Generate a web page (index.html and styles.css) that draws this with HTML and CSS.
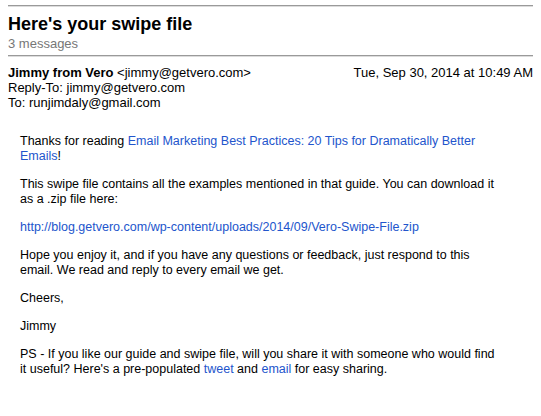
FILE: index.html
```html
<!DOCTYPE html>
<html>
<head>
<meta charset="utf-8">
<link rel="stylesheet" href="styles.css">
</head>
<body>
<div class="page">
  <div class="rule rule-top"></div>
  <h1 class="subject">Here's your swipe file</h1>
  <div class="count">3 messages</div>
  <div class="rule rule-mid"></div>
  <div class="meta">
    <div class="meta-row">
      <div><b>Jimmy from Vero</b> &lt;jimmy@getvero.com&gt;</div>
      <div class="date">Tue, Sep 30, 2014 at 10:49 AM</div>
    </div>
    <div>Reply-To: jimmy@getvero.com</div>
    <div>To: runjimdaly@gmail.com</div>
  </div>
  <div class="body">
    <p>Thanks for reading <a href="#">Email Marketing Best Practices: 20 Tips for Dramatically Better Emails</a>!</p>
    <p>This swipe file contains all the examples mentioned in that guide. You can download it as a .zip file here:</p>
    <p><a href="#">http://blog.getvero.com/wp-content/uploads/2014/09/Vero-Swipe-File.zip</a></p>
    <p>Hope you enjoy it, and if you have any questions or feedback, just respond to this email. We read and reply to every email we get.</p>
    <p>Cheers,</p>
    <p>Jimmy</p>
    <p>PS - If you like our guide and swipe file, will you share it with someone who would find it useful? Here's a pre-populated <a href="#">tweet</a> and <a href="#">email</a> for easy sharing.</p>
  </div>
</div>
</body>
</html>
```
FILE: styles.css
```css
html, body {
  margin: 0;
  padding: 0;
  background: #fff;
}
.page {
  width: 525px;
  padding: 5px 8px 0;
  font-family: "Liberation Sans", Arial, sans-serif;
  font-size: 13px;
  line-height: 15px;
  color: #000;
}
.rule {
  height: 1px;
  background: #9a9a9a;
  border-bottom: 1px solid #dcdcdc;
}
.subject {
  margin: 7px 0 0;
  font-size: 18px;
  line-height: 21px;
  font-weight: bold;
}
.count {
  color: #777;
  margin-top: 1px;
}
.rule-mid {
  margin-top: 4px;
}
.meta {
  margin-top: 8px;
}
.meta-row {
  display: flex;
  justify-content: space-between;
}
.body {
  padding-left: 12px;
  width: 482px;
  margin-top: 24px;
  font-size: 12.5px;
  line-height: 15px;
}
.body p {
  margin: 0 0 13px;
}
.body a {
  color: #2255cc;
  text-decoration: none;
}
```
